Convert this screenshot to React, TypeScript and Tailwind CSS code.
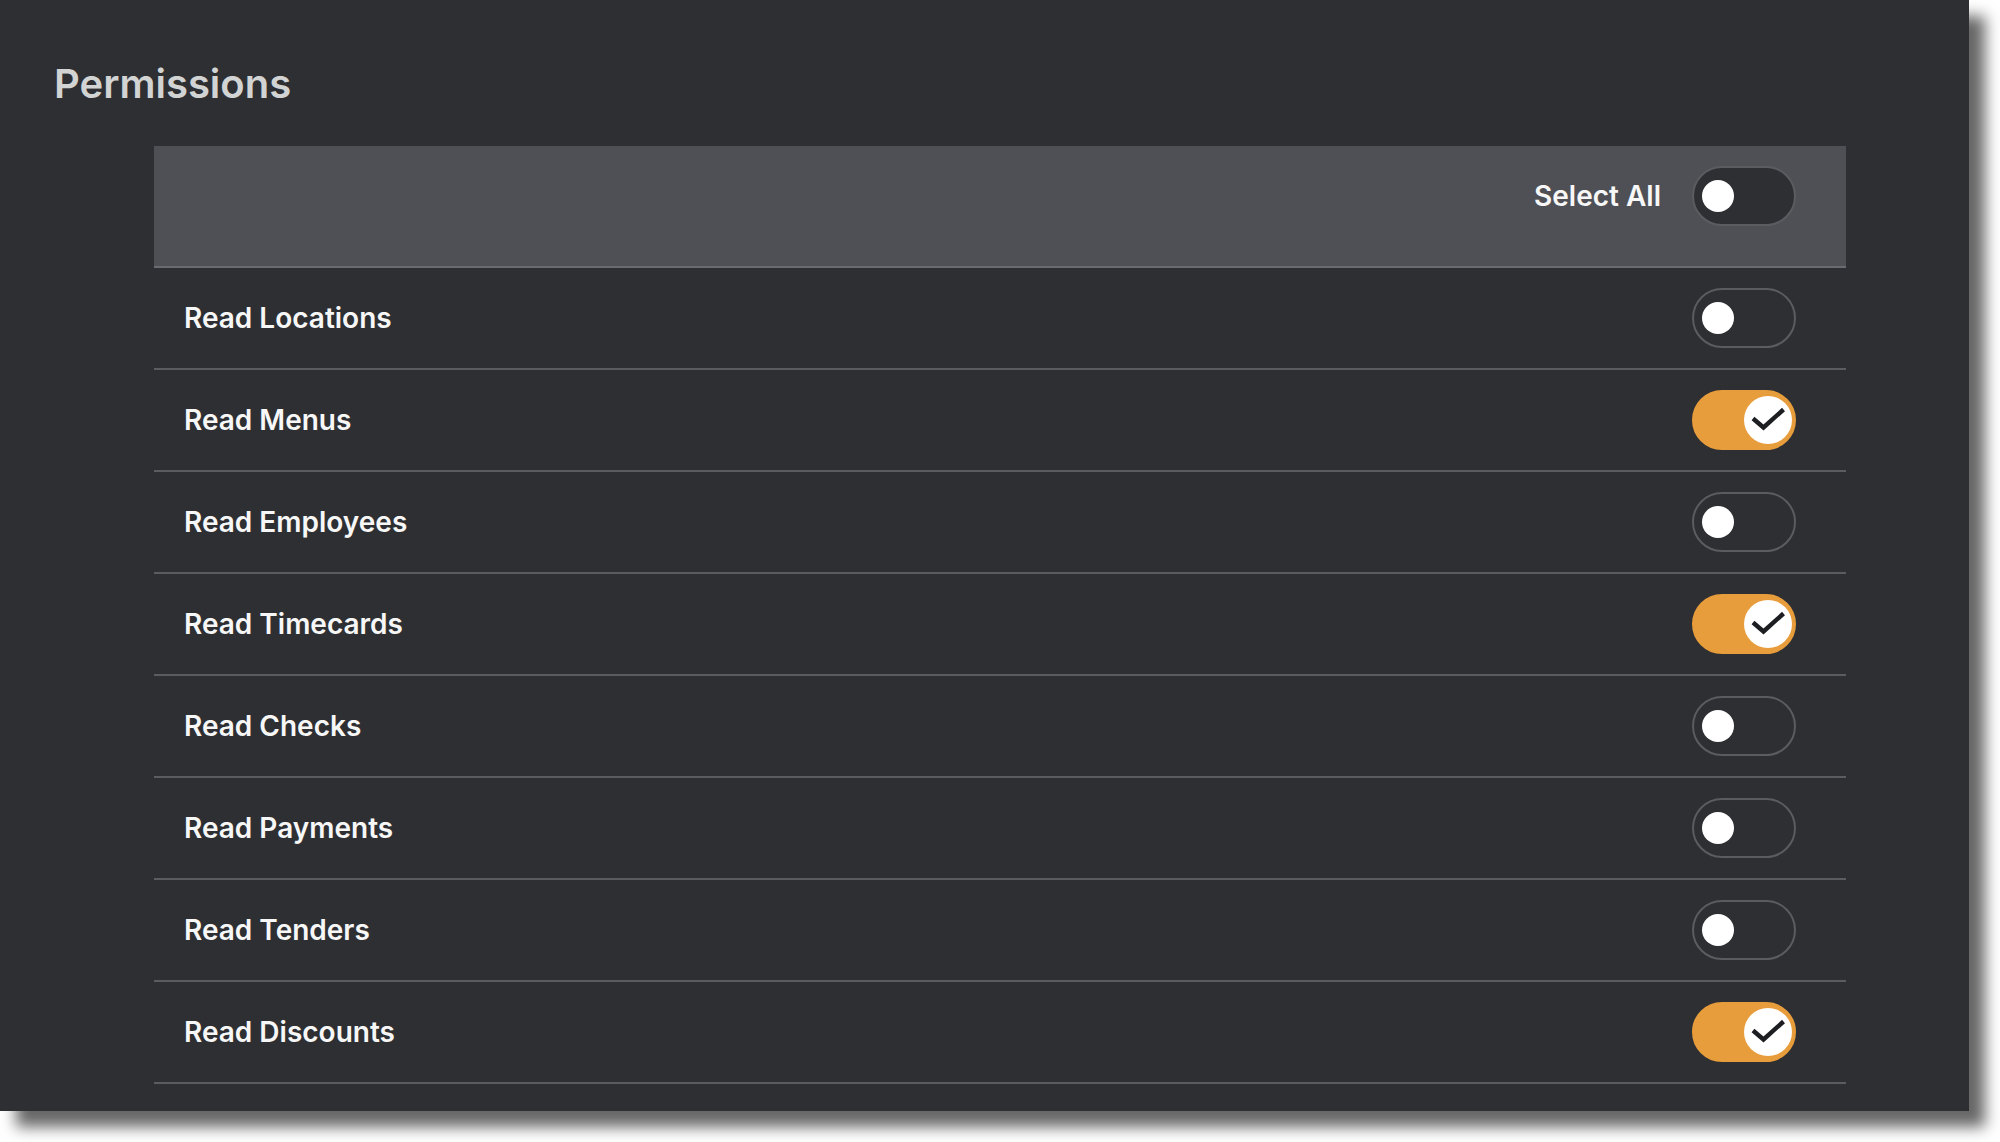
import { useState } from "react";

type Permission = { key: string; label: string };

const PERMISSIONS: Permission[] = [
  { key: "locations", label: "Read Locations" },
  { key: "menus", label: "Read Menus" },
  { key: "employees", label: "Read Employees" },
  { key: "timecards", label: "Read Timecards" },
  { key: "checks", label: "Read Checks" },
  { key: "payments", label: "Read Payments" },
  { key: "tenders", label: "Read Tenders" },
  { key: "discounts", label: "Read Discounts" },
];

function Switch({ checked, onChange }: { checked: boolean; onChange: () => void }) {
  return (
    <button
      type="button"
      role="switch"
      aria-checked={checked}
      onClick={onChange}
      className={
        checked
          ? "flex h-[60px] w-[104px] shrink-0 items-center justify-end rounded-full border-2 border-[#e89d3c] bg-[#e89d3c] pr-[2px]"
          : "flex h-[60px] w-[104px] shrink-0 items-center justify-start rounded-full border-2 border-[#5b5c60] bg-[#2e2f33] pl-[8px]"
      }
    >
      {checked ? (
        <span className="flex h-[48px] w-[48px] items-center justify-center rounded-full bg-white">
          <svg width="48" height="48" viewBox="0 0 48 48" fill="none">
            <path d="M9 22.5L19.5 31.5L39.5 13.5" stroke="#1d1e22" strokeWidth="4.4" />
          </svg>
        </span>
      ) : (
        <span className="h-[32px] w-[32px] rounded-full bg-white" />
      )}
    </button>
  );
}

export default function App() {
  const [perms, setPerms] = useState<Record<string, boolean>>({
    menus: true,
    timecards: true,
    discounts: true,
  });

  const allOn = PERMISSIONS.every((p) => perms[p.key]);

  const toggleAll = () => {
    const next: Record<string, boolean> = {};
    PERMISSIONS.forEach((p) => (next[p.key] = !allOn));
    setPerms(next);
  };

  return (
    <div className="h-[1142px] w-[2000px] overflow-hidden bg-white font-['Inter',sans-serif]">
      <div className="h-[1111px] w-[1969px] bg-[#2e2f33] shadow-[16px_16px_14px_rgba(0,0,0,0.6)]">
        <h1 className="pl-[54px] pt-[60px] text-[40px] leading-[48px] font-semibold text-[#d2d3d3]">Permissions</h1>

        <div className="ml-[154px] mt-[38px] w-[1692px]">
          {/* header with the select-all switch */}
          <div className="flex h-[122px] items-start justify-end gap-[31px] border-b-2 border-[#6a6b6f] bg-[#4f5055] pr-[50px] pt-[20px]">
            <span className="flex h-[60px] items-center text-[28px] font-semibold text-[#f7f7f7]">Select All</span>
            <Switch checked={allOn} onChange={toggleAll} />
          </div>

          {PERMISSIONS.map((p) => (
            <div
              key={p.key}
              className="flex h-[102px] items-center justify-between border-b-2 border-[#5b5c60] pl-[30px] pr-[50px]"
            >
              <span className="text-[28px] font-semibold text-[#f7f7f7]">{p.label}</span>
              <Switch
                checked={!!perms[p.key]}
                onChange={() => setPerms((s) => ({ ...s, [p.key]: !s[p.key] }))}
              />
            </div>
          ))}
        </div>
      </div>
    </div>
  );
}
